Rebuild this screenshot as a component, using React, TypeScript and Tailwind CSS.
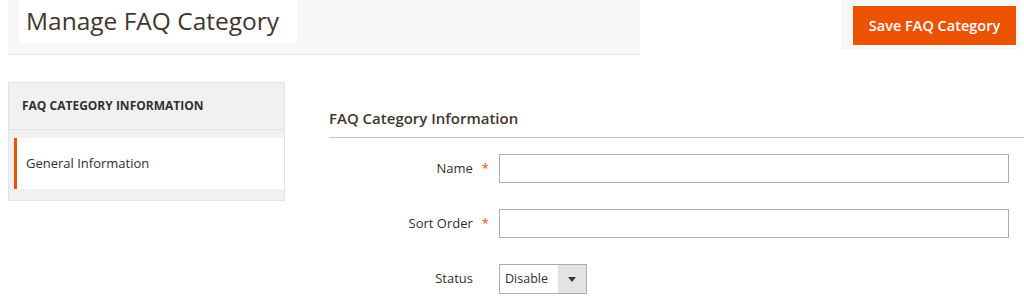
export default function App() {
  const font = { fontFamily: '"Open Sans", "Noto Sans", sans-serif' };

  return (
    <div className="w-[1024px] h-[301px] bg-white overflow-hidden text-[#303030]" style={font}>
      <header className="flex items-start">
        <div className="ml-[8px] w-[632px] h-[55px] bg-[#f7f7f7] border-b border-[#e6e6e6]">
          <div className="ml-[11px] w-[278px] h-[43px] bg-white flex items-center pl-[7px]">
            <h1 className="text-[24.5px] leading-none text-[#41362f] font-normal whitespace-nowrap">Manage FAQ Category</h1>
          </div>
        </div>
        <div className="ml-auto mr-[4px] w-[179px] h-[49px] bg-[#f7f7f7] pl-[12px] pt-[6px]">
          <button className="w-[163px] h-[39px] bg-[#eb5202] text-white text-[14.5px] font-semibold whitespace-nowrap">
            Save FAQ Category
          </button>
        </div>
      </header>

      <div className="flex mt-[27px]">
        <aside className="ml-[8px] w-[277px] h-[119px] bg-[#f1f1f1] border border-[#e3e3e3]">
          <div className="h-[47px] flex items-center pl-[13px] border-b border-[#e3e3e3]">
            <span className="text-[12px] font-bold uppercase text-[#303030]">FAQ Category Information</span>
          </div>
          <div className="mt-[8px] ml-[5px] h-[51px] bg-white border-l-[3px] border-[#eb5202] flex items-center pl-[9px]">
            <span className="text-[13px] text-[#303030]">General Information</span>
          </div>
        </aside>

        <main className="ml-[44px] flex-1">
          <div className="pt-[26px] pb-[9px] border-b border-[#cac3b4]">
            <h2 className="text-[15px] font-semibold text-[#41362f] leading-[20px]">FAQ Category Information</h2>
          </div>

          <div className="mt-[16px] flex flex-col gap-[26px]">
            <div className="flex items-center">
              <label className="w-[170px] flex justify-end items-center pr-[10px] text-[13px] font-medium">
                Name<span className="ml-[9px] text-[#eb5202] text-[13px] font-normal">*</span>
              </label>
              <input className="w-[510px] h-[29px] border border-[#adadad] outline-none" />
            </div>
            <div className="flex items-center">
              <label className="w-[170px] flex justify-end items-center pr-[10px] text-[13px] font-medium">
                Sort Order<span className="ml-[9px] text-[#eb5202] text-[13px] font-normal">*</span>
              </label>
              <input className="w-[510px] h-[29px] border border-[#adadad] outline-none" />
            </div>
            <div className="flex items-center">
              <label className="w-[170px] flex justify-end items-center pr-[26px] text-[13px] font-medium">
                Status
              </label>
              <div className="w-[88px] h-[30px] border border-[#adadad] flex">
                <span className="flex-1 flex items-center pl-[5px] text-[12.5px] text-[#303030]">Disable</span>
                <span className="w-[28px] bg-[#e3e3e3] flex items-center justify-center">
                  <svg width="8" height="5" viewBox="0 0 8 5"><path d="M0 0h8L4 5z" fill="#41362f" /></svg>
                </span>
              </div>
            </div>
          </div>
        </main>
      </div>
    </div>
  );
}
